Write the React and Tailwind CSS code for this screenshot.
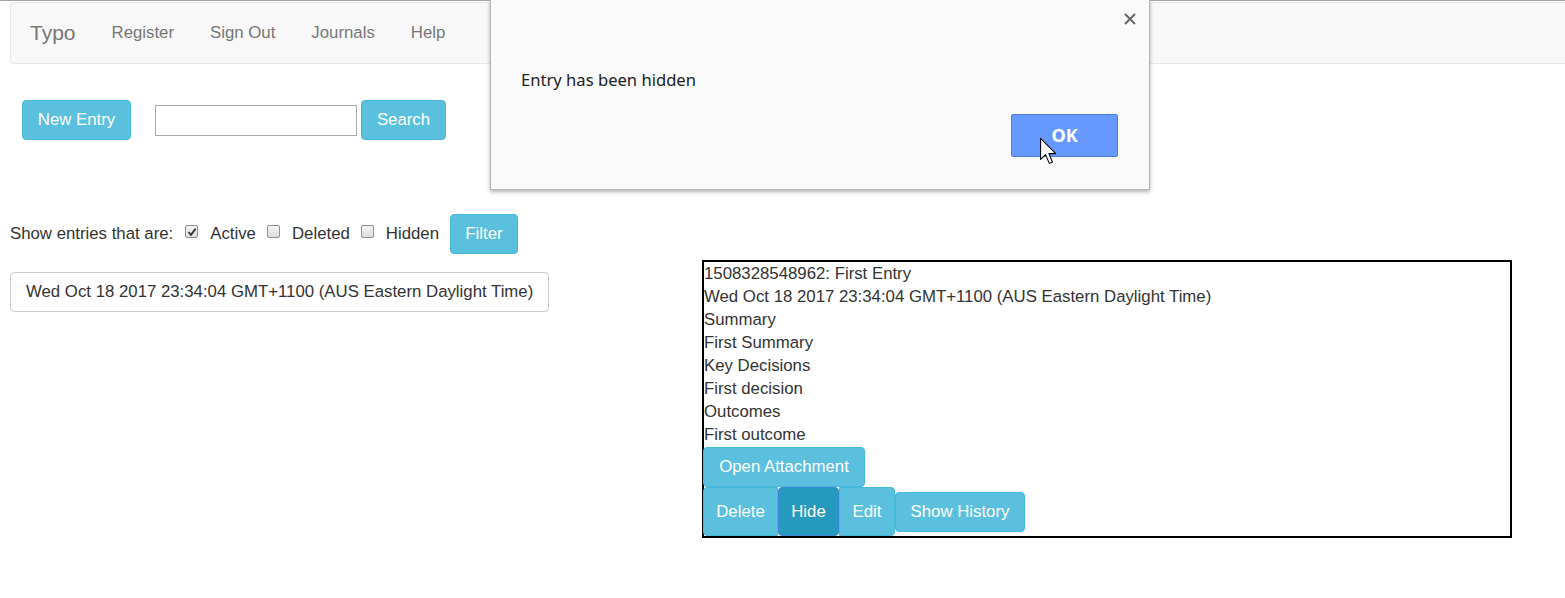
import React from "react";

const btn = "bg-[#5bc0de] border border-[#46b8da] text-white rounded-[4px] text-[16.8px] leading-[20px] flex items-center justify-center";

function Check({ checked }) {
  return (
    <span className="w-[13px] h-[13px] mb-[5px] rounded-[2px] border border-[#8f8f8f] bg-gradient-to-b from-[#f4f4f4] to-[#dcdcdc] flex items-center justify-center shrink-0">
      {checked && (
        <svg width="10" height="10" viewBox="0 0 10 10">
          <path d="M1.5 5.2 L4 7.8 L8.6 1.6" fill="none" stroke="#333" strokeWidth="1.8" />
        </svg>
      )}
    </span>
  );
}

export default function App() {
  const lines = [
    "1508328548962: First Entry",
    "Wed Oct 18 2017 23:34:04 GMT+1100 (AUS Eastern Daylight Time)",
    "Summary",
    "First Summary",
    "Key Decisions",
    "First decision",
    "Outcomes",
    "First outcome",
  ];
  return (
    <div className="relative w-[1565px] h-[598px] bg-white overflow-hidden text-[#333]" style={{ fontFamily: '"Liberation Sans", Arial, sans-serif' }}>
      <div className="border-t border-[#a6a6a6] pt-px">
        <div className="ml-[10px] h-[62px] bg-[#f8f8f8] border border-r-0 border-[#e7e7e7] rounded-l-[4px] flex items-center">
          <span className="ml-[19px] text-[21px] text-[#777]">Typo</span>
          <span className="ml-[36px] text-[16.8px] text-[#777]">Register</span>
          <span className="ml-[36px] text-[16.8px] text-[#777]">Sign Out</span>
          <span className="ml-[36px] text-[16.8px] text-[#777]">Journals</span>
          <span className="ml-[36px] text-[16.8px] text-[#777]">Help</span>
        </div>
      </div>

      <div className="flex items-center mt-[36px] ml-[22px] h-[40px]">
        <div className={`${btn} w-[109px] h-[40px]`}>New Entry</div>
        <div className="ml-[24px] w-[202px] h-[31px] border border-[#a9a9a9] bg-white" />
        <div className={`${btn} ml-[4px] w-[85px] h-[40px]`}>Search</div>
      </div>

      <div className="flex items-center mt-[74px] ml-[10px] h-[40px] text-[16.8px]">
        <span>Show entries that are:</span>
        <span className="ml-[12px] flex"><Check checked /></span>
        <span className="ml-[12px]">Active</span>
        <span className="ml-[11px] flex"><Check /></span>
        <span className="ml-[12px]">Deleted</span>
        <span className="ml-[11px] flex"><Check /></span>
        <span className="ml-[12px]">Hidden</span>
        <div className={`${btn} ml-[11px] w-[68px] h-[40px]`}>Filter</div>
      </div>

      <div className="flex mt-[6px]">
        <div className="ml-[10px] mt-[12px] w-[539px] h-[40px] border border-[#ccc] rounded-[4px] flex items-center pl-[15px] text-[16.8px]">
          Wed Oct 18 2017 23:34:04 GMT+1100 (AUS Eastern Daylight Time)
        </div>
        <div className="ml-[153px] w-[810px] h-[278px] border-2 border-black flex flex-col">
          {lines.map((l, i) => (
            <div key={i} className="h-[23px] leading-[23px] text-[16.8px]">{l}</div>
          ))}
          <div className={`${btn} mt-px -ml-px w-[162px] h-[40px] shrink-0`}>Open Attachment</div>
          <div className="flex items-center -ml-px">
            <div className={`${btn} w-[75px] h-[49px] rounded-r-none`}>Delete</div>
            <div className="bg-[#269abc] border border-[#3d86d9] text-white text-[16.8px] w-[61px] h-[49px] rounded-[4px] flex items-center justify-center">Hide</div>
            <div className={`${btn} w-[56px] h-[49px] rounded-l-none`}>Edit</div>
            <div className={`${btn} w-[130px] h-[40px]`}>Show History</div>
          </div>
        </div>
      </div>

      <div className="absolute left-[490px] top-0 w-[660px] h-[190px] bg-[#fafafa] border border-t-0 border-[#b5b5b5] shadow-[0_2px_4px_rgba(0,0,0,0.3)]">
        <svg className="absolute left-[633px] top-[13px]" width="12" height="12" viewBox="0 0 12 12">
          <path d="M1 1 L11 11 M11 1 L1 11" stroke="#666" strokeWidth="2" />
        </svg>
        <div className="absolute left-[30px] top-[68px] text-[16.6px] text-[#222]" style={{ fontFamily: '"Noto Sans", "Open Sans", sans-serif' }}>
          Entry has been hidden
        </div>
        <div className="absolute left-[520px] top-[114px] w-[107px] h-[43px] bg-[#6599ff] border border-[#4f7fd8] rounded-[2px] flex items-center justify-center text-white text-[18px] font-bold" style={{ fontFamily: '"Noto Sans", "Open Sans", sans-serif' }}>
          OK
        </div>
        <svg className="absolute left-[548px] top-[137px]" width="19" height="29" viewBox="0 0 14 22">
          <path d="M1 1 L1 17 L4.8 13.4 L7.6 20 L10 19 L7.3 12.6 L12.5 12.6 Z" fill="white" stroke="black" strokeWidth="0.8" strokeLinejoin="round" />
        </svg>
      </div>
    </div>
  );
}
